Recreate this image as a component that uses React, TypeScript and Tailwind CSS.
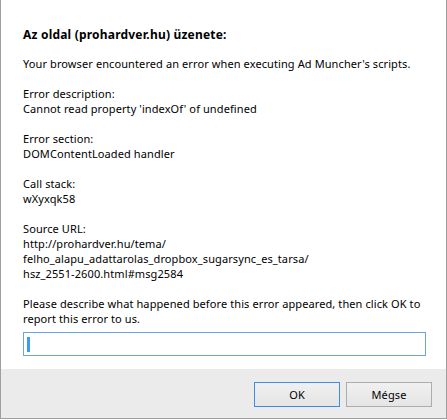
const lines: string[][] = [
  ['Error description:', "Cannot read property 'indexOf' of undefined"],
  ['Error section:', 'DOMContentLoaded handler'],
  ['Call stack:', 'wXyxqk58'],
  [
    'Source URL:',
    'http://prohardver.hu/tema/',
    'felho_alapu_adattarolas_dropbox_sugarsync_es_tarsa/',
    'hsz_2551-2600.html#msg2584',
  ],
];

export default function App() {
  return (
    <div
      className="w-[447px] h-[419px] bg-white border-l border-r border-b border-[#9f9f9f] flex flex-col text-[11px] leading-[15px] tracking-[0.1px] text-black"
      style={{ fontFamily: '"Noto Sans", "Open Sans", sans-serif' }}
    >
      <div className="h-[369px] shrink-0 pl-[22px] pr-[10px] pt-[27px] whitespace-nowrap">
        <h1 className="font-bold text-[12px] tracking-[0.2px] mb-[14px]">Az oldal (prohardver.hu) üzenete:</h1>
        <p className="mb-[15px]">Your browser encountered an error when executing Ad Muncher's scripts.</p>
        {lines.map((group, i) => (
          <div key={i} className="mb-[15px]">
            {group.map(l => (
              <div key={l}>{l}</div>
            ))}
          </div>
        ))}
        <p>
          Please describe what happened before this error appeared, then click OK to
          <br />
          report this error to us.
        </p>
        <div className="mt-[6px] w-[403px] h-[24px] border border-[#6ea3e6] flex items-center pl-[3px]">
          <span className="w-[3px] h-[15px] bg-[#3d9bf8]"></span>
        </div>
      </div>
      <div className="flex-1 bg-[#ebebeb] flex justify-end items-start pt-[13px] pr-[14px] gap-[6px]">
        <button className="w-[86px] h-[25px] border border-[#3e8de3] bg-gradient-to-b from-[#f0f0f0] to-[#e5e5e5]">
          OK
        </button>
        <button className="w-[86px] h-[25px] border border-[#adadad] bg-gradient-to-b from-[#f0f0f0] to-[#e5e5e5]">
          Mégse
        </button>
      </div>
    </div>
  );
}
